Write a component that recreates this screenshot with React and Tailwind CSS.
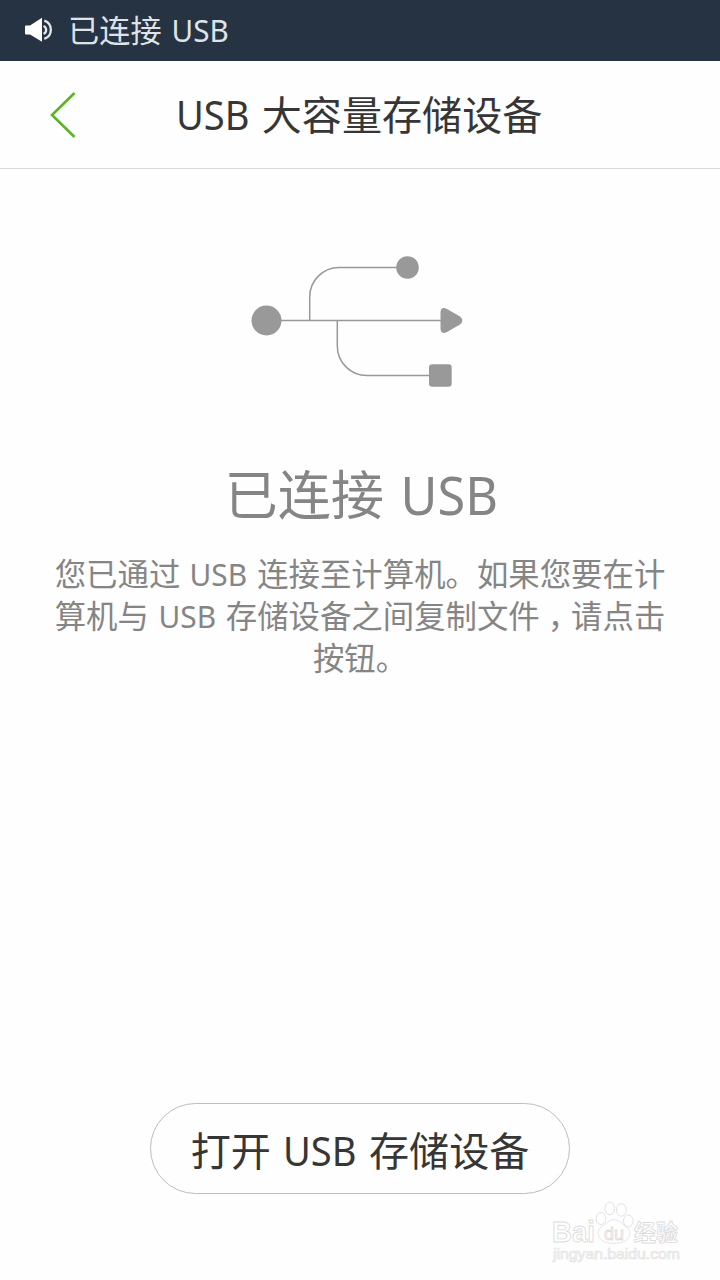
function VolumeIcon() {
  return (
    <svg className="h-[26px] w-[30px] shrink-0" viewBox="0 0 30 26" fill="none">
      <path d="M1 9.5 Q1 8.5 2 8.5 H6 L18 0.8 V24.8 L6 17.5 H2 Q1 17.5 1 16.5 Z" fill="#fff" />
      <path d="M19.5 9 A4.2 4.2 0 0 1 19.5 16.8" stroke="#e5e8ea" strokeWidth="2.3" />
      <path d="M20.3 3.6 A9.6 9.6 0 0 1 20.3 21.8" stroke="#e5e8ea" strokeWidth="2.3" />
    </svg>
  );
}

function UsbDiagram() {
  return (
    <svg className="h-[140px] w-[220px]" viewBox="250 250 220 140" fill="none">
      <g stroke="#999" strokeWidth="1.5">
        <path d="M266 320.5 H445" />
        <path d="M309.7 320.5 V297 A29.5 29.5 0 0 1 339.2 267.5 H398" />
        <path d="M337.3 320.5 V346 A29.5 29.5 0 0 0 366.8 375.5 H431" />
      </g>
      <g fill="#999">
        <circle cx="266.5" cy="320.5" r="15" />
        <circle cx="407.5" cy="267.5" r="11.3" />
        <path d="M440.5 313 Q440.5 306 447 309 L460 316.5 Q464.5 320.5 460 324.5 L447 332 Q440.5 335 440.5 328 Z" />
        <rect x="429" y="364.2" width="22.7" height="22.6" rx="3.2" />
      </g>
    </svg>
  );
}

function Watermark() {
  return (
    <svg className="absolute bottom-[14px] left-[548px] h-[66px] w-[136px]" viewBox="548 1200 136 66">
      <g fill="#fff" stroke="#dcdcdc" strokeWidth="0.9">
        <g fontFamily="'Liberation Sans', 'Noto Sans CJK SC', sans-serif" fontWeight="700">
          <text x="552" y="1242" fontSize="29" textLength="43" lengthAdjust="spacingAndGlyphs">Bai</text>
          <text x="634" y="1241" fontSize="23" textLength="44" lengthAdjust="spacingAndGlyphs">经验</text>
        </g>
        <ellipse cx="601" cy="1218.5" rx="4.8" ry="6" />
        <ellipse cx="609.7" cy="1208.5" rx="4.8" ry="6.3" />
        <ellipse cx="621.3" cy="1210" rx="4.9" ry="6.3" />
        <ellipse cx="628.3" cy="1221" rx="4.8" ry="6" />
        <path d="M614 1219.5 C619 1219.5 621.5 1225 626 1229 C633 1235 630 1246 622 1250 C617 1251.5 611 1251.5 606 1250 C598 1246 595.5 1235 601 1230 C605.5 1226 609 1219.5 614 1219.5 Z" transform="translate(0 305) scale(1 0.75)" />
        <text x="604" y="1240" fontFamily="'Liberation Sans', sans-serif" fontSize="19" textLength="20" lengthAdjust="spacingAndGlyphs">du</text>
      </g>
      <text x="553" y="1259" fontFamily="'Liberation Sans', sans-serif" fontSize="14" textLength="127" lengthAdjust="spacingAndGlyphs" fill="#fff" stroke="#e2e2e2" strokeWidth="0.7">jingyan.baidu.com</text>
    </svg>
  );
}

function Usb() {
  return <span className="inline-block scale-x-[0.95]">USB</span>;
}

export default function App() {
  return (
    <div className="relative flex h-[1280px] w-[720px] flex-col overflow-hidden bg-[#fefefe] font-['Noto_Sans','Noto_Sans_CJK_SC',sans-serif]">
      <header className="flex h-[61px] shrink-0 items-center bg-[#263343] pb-[1px] pl-6 text-[#dfe3e7]">
        <VolumeIcon />
        <span className="ml-[14px] whitespace-nowrap text-[31.2px] leading-[60px]">已连接 <Usb /></span>
      </header>
      <nav className="flex h-[108px] shrink-0 items-center border-b border-[#dadada] pl-[49px] pt-px">
        <svg className="h-[48px] w-[28px] shrink-0" viewBox="0 0 28 48" fill="none">
          <path d="M25.5 2 L3 24 L25.5 46" stroke="#5bb523" strokeWidth="2.6" />
        </svg>
        <h1 className="ml-[97px] whitespace-nowrap text-[40.1px] leading-[60px] text-[#363636]"><Usb /> 大容量存储设备</h1>
      </nav>
      <main className="flex flex-1 flex-col items-center">
        <div className="mt-[81px] flex">
          <UsbDiagram />
        </div>
        <h2 className="mt-[65px] whitespace-nowrap pl-[5px] text-[53.2px] leading-[80px] text-[#858585]">已连接 <Usb /></h2>
        <div className="mt-[18px] whitespace-nowrap text-center text-[31.4px] leading-[42px] text-[#858585]">
          <p>您已通过 <Usb /> 连接至计算机。如果您要在计</p>
          <p>算机与 <Usb /> 存储设备之间复制文件<span className="inline-block w-[1em] pl-[8px]">，</span>请点击</p>
          <p>按钮。</p>
        </div>
        <button className="mb-[86px] mt-auto flex h-[91px] w-[420px] items-center justify-center whitespace-nowrap rounded-full border-[1.5px] border-[#bdbdbd] pt-[4px] text-[40.1px] leading-[60px] text-[#363636]">
          <span>打开 <Usb /> 存储设备</span>
        </button>
      </main>
      <Watermark />
    </div>
  );
}
